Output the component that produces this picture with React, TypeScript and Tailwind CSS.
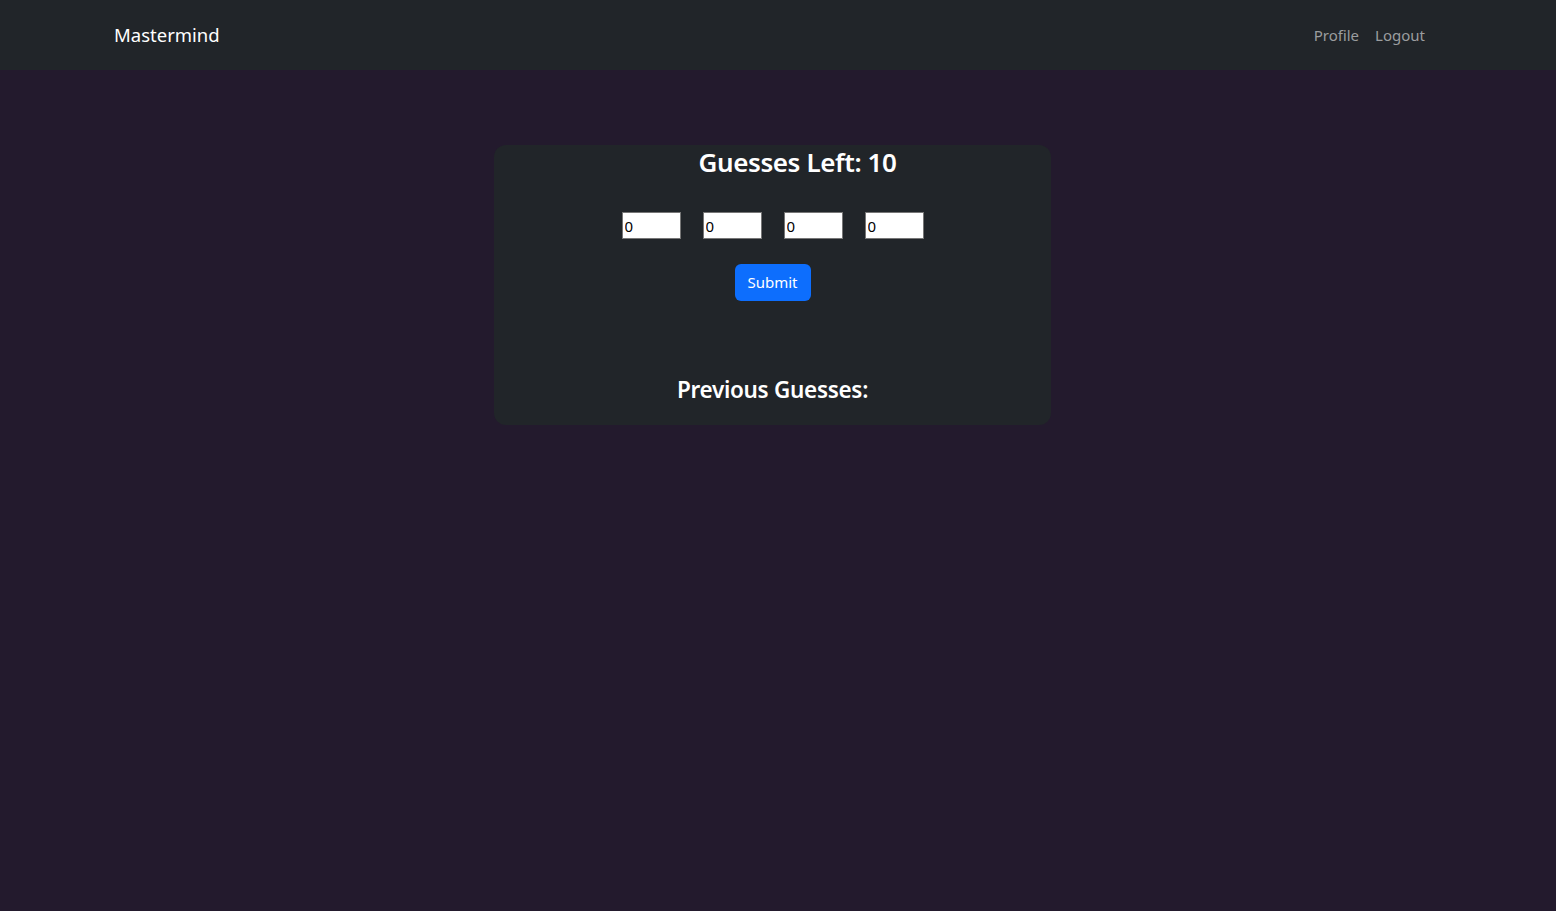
import * as React from "react";

const font = { fontFamily: '"Noto Sans", "Open Sans", sans-serif' };

function GuessInput() {
  return (
    <input
      type="text"
      defaultValue="0"
      className="w-[59px] h-[27px] bg-white border border-[#767676] px-[2px] text-[15px] text-black outline-none"
      style={{ fontFamily: '"Noto Sans", sans-serif' }}
    />
  );
}

export default function App() {
  return (
    <div className="min-h-[911px] bg-[#231a2d] text-white" style={font}>
      <nav className="h-[70px] bg-[#212529] flex items-center justify-between pl-[114px] pr-[131px]">
        <span className="text-[18.5px] leading-[26px] -mt-[1px] text-white">Mastermind</span>
        <div className="flex gap-4 text-[15px] leading-[22px] -mt-[1px] text-[#9b9d9f]">
          <a href="#">Profile</a>
          <a href="#">Logout</a>
        </div>
      </nav>

      <div className="flex justify-center pr-[11px] pt-[75px]">
        <div className="w-[557px] h-[280px] bg-[#212529] rounded-xl flex flex-col items-center">
          <h2 className="pl-[50px] text-[26px] leading-[34px] font-semibold tracking-[-0.4px]">
            Guesses Left: 10
          </h2>
          <div className="mt-[33px] flex gap-[22px]">
            <GuessInput />
            <GuessInput />
            <GuessInput />
            <GuessInput />
          </div>
          <button className="mt-[25px] w-[76px] h-[37px] rounded-md bg-[#0d6efd] text-[15px] text-white">
            Submit
          </button>
          <h3 className="mt-[74px] text-[22.5px] leading-[30px] font-semibold tracking-[-0.3px]">
            Previous Guesses:
          </h3>
        </div>
      </div>
    </div>
  );
}
